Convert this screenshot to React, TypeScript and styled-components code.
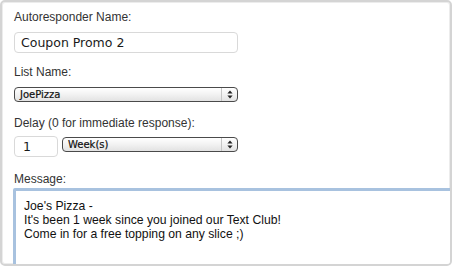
import { FC } from 'react'
import styled, { createGlobalStyle } from 'styled-components'

const GlobalStyle = createGlobalStyle`
    html, body {
        margin: 0;
        padding: 0;
        background: #ffffff;
    }
`

const Frame = styled.div`
    box-sizing: border-box;
    width: 452px;
    height: 266px;
    border: 2px solid #d4d4d4;
    border-radius: 5px;
    box-shadow: inset 0 0 0 1px #ececec;
    background: #ffffff;
    overflow: hidden;
    padding: 7px 0 0 12px;
    font-family: "Liberation Sans", Arial, sans-serif;
`

const Label = styled.div<{ gap?: number }>`
    font-size: 12px;
    line-height: 16px;
    color: #333333;
    margin-top: ${({ gap }) => gap ?? 0}px;
`

const TextInput = styled.div<{ width: number; top?: number; indent?: number }>`
    box-sizing: border-box;
    width: ${({ width }) => width}px;
    height: 21px;
    margin-top: ${({ top }) => top ?? 7}px;
    border: 1px solid #d9d9d9;
    border-radius: 4px;
    padding-left: ${({ indent }) => indent ?? 6}px;
    display: flex;
    align-items: center;
    font-family: "DejaVu Sans", sans-serif;
    font-size: 12.5px;
    color: #1a1a1a;
`

const Row = styled.div`
    display: flex;
    align-items: flex-start;
    gap: 4px;
`

const SelectBox = styled.div<{ width: number; top: number }>`
    box-sizing: border-box;
    width: ${({ width }) => width}px;
    height: 15px;
    margin-top: ${({ top }) => top}px;
    border: 1px solid #4a4a4a;
    border-radius: 4px;
    background: linear-gradient(#ffffff, #f2f2f2 50%, #e2e2e2);
    display: flex;
    align-items: center;
    font-family: "DejaVu Sans", sans-serif;
    font-size: 10px;
    color: #111111;
`

const SelectText = styled.span`
    flex: 1;
    padding-left: 5px;
    -webkit-text-stroke: 0.2px #111;
`

const SelectArrow = styled.span`
    width: 15px;
    height: 100%;
    border-left: 1px solid #c6c6c6;
    display: flex;
    align-items: center;
    justify-content: center;
`

const Message = styled.textarea`
    display: block;
    box-sizing: border-box;
    width: 440px;
    height: 110px;
    margin: 1px 0 0 -1px;
    border: 3px solid #a8c2df;
    border-radius: 2px;
    padding: 8px 8px;
    resize: none;
    outline: none;
    font-family: "Liberation Sans", Arial, sans-serif;
    font-size: 12.2px;
    line-height: 14px;
    color: #111111;
    background: #ffffff;
`

const Arrows: FC = () => (
    <svg width="6" height="9" viewBox="0 0 6 9">
        <path d="M3 0.5 L5.6 3.6 H0.4 Z" fill="#222" />
        <path d="M3 8.5 L5.6 5.4 H0.4 Z" fill="#222" />
    </svg>
)

type SelectProps = {
    value: string
    width: number
    top: number
}

const Select: FC<SelectProps> = ({ value, width, top }) => (
    <SelectBox width={width} top={top}>
        <SelectText>{value}</SelectText>
        <SelectArrow><Arrows /></SelectArrow>
    </SelectBox>
)

const App: FC = () => {
    return (
        <>
            <GlobalStyle />
            <Frame>
                <Label>Autoresponder Name:</Label>
                <TextInput width={224}>Coupon Promo 2</TextInput>
                <Label gap={11}>List Name:</Label>
                <Select value="JoePizza" width={224} top={7} />
                <Label gap={13}>Delay (0 for immediate response):</Label>
                <Row>
                    <TextInput width={44} top={5} indent={8}>1</TextInput>
                    <Select value="Week(s)" width={176} top={6} />
                </Row>
                <Label gap={14}>Message:</Label>
                <Message
                    readOnly
                    defaultValue={"Joe's Pizza -\nIt's been 1 week since you joined our Text Club!\nCome in for a free topping on any slice ;)"}
                />
            </Frame>
        </>
    )
}

export default App
